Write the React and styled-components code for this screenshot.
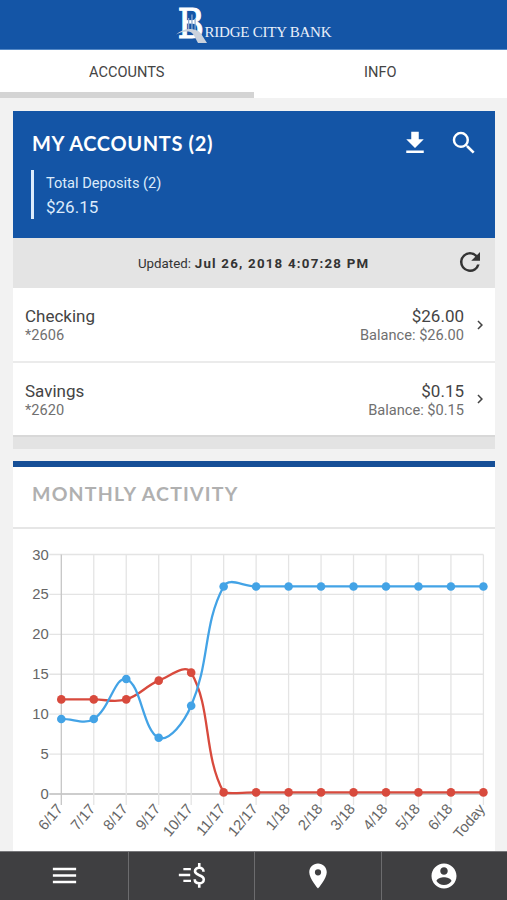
import React from 'react';
import styled, { createGlobalStyle } from 'styled-components';

const accounts = [
    { name: 'Checking', number: '*2606', available: '$26.00', balance: '$26.00' },
    { name: 'Savings', number: '*2620', available: '$0.15', balance: '$0.15' },
];

const months = ['6/17', '7/17', '8/17', '9/17', '10/17', '11/17', '12/17', '1/18', '2/18', '3/18', '4/18', '5/18', '6/18', 'Today'];
const deposits = [9.4, 9.4, 14.4, 7.05, 11.05, 26, 26, 26, 26, 26, 26, 26, 26, 26];
const withdrawals = [11.85, 11.85, 11.85, 14.2, 15.2, 0.2, 0.2, 0.2, 0.2, 0.2, 0.2, 0.2, 0.2, 0.2];

const area = { left: 48.3, right: 470.4, top: 25.5, bottom: 265 };

const getX = (i) => area.left + (i * (area.right - area.left)) / (months.length - 1);
const getY = (value) => area.bottom - (value * (area.bottom - area.top)) / 30;
const clampY = (y) => Math.min(area.bottom, Math.max(area.top, y));

// smooth line with control points kept inside of the chart area
const getPath = (values) => {
    const points = values.map((value, i) => ({ x: getX(i), y: getY(value) }));
    const controls = points.map((point, i) => {
        const prev = points[i - 1] || point;
        const next = points[i + 1] || point;
        const d1 = Math.hypot(point.x - prev.x, point.y - prev.y);
        const d2 = Math.hypot(next.x - point.x, next.y - point.y);
        const a = (0.4 * d1) / (d1 + d2);
        const b = (0.4 * d2) / (d1 + d2);
        return {
            inX: point.x - a * (next.x - prev.x),
            inY: clampY(point.y - a * (next.y - prev.y)),
            outX: point.x + b * (next.x - prev.x),
            outY: clampY(point.y + b * (next.y - prev.y)),
        };
    });

    return points.reduce((path, point, i) => {
        if (i === 0) return `M${point.x} ${point.y}`;
        const from = controls[i - 1];
        const to = controls[i];
        return `${path} C${from.outX} ${from.outY} ${to.inX} ${to.inY} ${point.x} ${point.y}`;
    }, '');
}

const Icon = ({ size, children }) => (
    <IconSvg viewBox="0 0 24 24" $size={size}>{children}</IconSvg>
)

const Line = ({ values, color }) => (
    <g>
        <path d={getPath(values)} fill="none" stroke={color} strokeWidth="2.3" />
        {values.map((value, i) => (
            <circle key={i} cx={getX(i)} cy={getY(value)} r="4.3" fill={color} />
        ))}
    </g>
)

const ActivityChart = () => (
    <Chart viewBox="0 0 482 322">
        {[0, 5, 10, 15, 20, 25, 30].map((value) => (
            <g key={value}>
                <line
                    x1={area.left - 12}
                    x2={area.right}
                    y1={getY(value)}
                    y2={getY(value)}
                    stroke={value === 0 ? '#bdbdbd' : '#e4e4e4'}
                    strokeWidth="1.3"
                />
                <AxisLabel x={area.left - 12.5} y={getY(value) + 5}>{value}</AxisLabel>
            </g>
        ))}
        {months.map((month, i) => (
            <g key={month}>
                <line
                    x1={getX(i)}
                    x2={getX(i)}
                    y1={area.top}
                    y2={area.bottom + 11}
                    stroke={i === 0 ? '#c6c6c6' : '#e4e4e4'}
                    strokeWidth="1.3"
                />
                <AxisLabel transform={`translate(${getX(i) - 1.5} ${area.bottom + 12}) rotate(-50)`} y="5">{month}</AxisLabel>
            </g>
        ))}
        <Line values={withdrawals} color="#d84a3d" />
        <Line values={deposits} color="#43a3e6" />
    </Chart>
)

const Logo = () => (
    <LogoSvg viewBox="0 0 160 44">
        <BigLetter transform="translate(1.5 38) scale(.88 1)">B</BigLetter>
        <path d="M12 30V18h1.300v12zM15.300 31V14.500h1.300V31zM18.500 32V19h1.200v13z" fill="#8fabd0" />
        <path d="M0 34.500C6 28.500 17 27 23 31.500C26 34 28 39 31 43H22C20 40 19 36 16 33C12 30.500 6 31.500 0 34.500z" fill="#c9d1dc" />
        <text x="28.500" y="36.500" fontSize="15" textLength="127" fill="#e9f0fa">RIDGE CITY BANK</text>
    </LogoSvg>
)

const App = () => {

    return(
        <Screen>
            <GlobalStyle />
            <Header><Logo /></Header>
            <Tabs>
                <Tab $active>ACCOUNTS</Tab>
                <Tab>INFO</Tab>
            </Tabs>
            <Content>
                <section>
                    <AccountsHeader>
                        <TitleRow>
                            <AccountsTitle>MY ACCOUNTS (2)</AccountsTitle>
                            <Actions>
                                <Icon size={30}><path d="M19 9h-4V3H9v6H5l7 7 7-7zM5 18v2h14v-2H5z" /></Icon>
                                <Icon size={30}><path d="M15.500 14h-.79l-.28-.27A6.471 6.471 0 0 0 16 9.500 6.500 6.500 0 1 0 9.500 16c1.610 0 3.090-.59 4.230-1.570l.27.28v.79l5 4.990L20.490 19l-4.990-5zm-6 0C7.010 14 5 11.990 5 9.500S7.010 5 9.500 5 14 7.010 14 9.500 11.990 14 9.500 14z" /></Icon>
                            </Actions>
                        </TitleRow>
                        <Total>
                            <TotalLabel>Total Deposits (2)</TotalLabel>
                            <TotalValue>$26.15</TotalValue>
                        </Total>
                    </AccountsHeader>
                    <Updated>
                        <UpdatedText>Updated: <UpdatedDate>Jul 26, 2018 4:07:28 PM</UpdatedDate></UpdatedText>
                        <Icon size={30}><path d="M17.650 6.350A7.958 7.958 0 0 0 12 4a8 8 0 1 0 7.730 10h-2.080A5.990 5.990 0 0 1 12 18c-3.310 0-6-2.690-6-6s2.690-6 6-6c1.660 0 3.140.69 4.220 1.780L13 11h7V4l-2.350 2.350z" /></Icon>
                    </Updated>
                    {accounts.map((account) => (
                        <Account key={account.number}>
                            <AccountInfo>
                                <Main>{account.name}</Main>
                                <Detail>{account.number}</Detail>
                            </AccountInfo>
                            <Amounts>
                                <Main>{account.available}</Main>
                                <Detail>Balance: {account.balance}</Detail>
                            </Amounts>
                            <Icon size={18}><path d="M10 6L8.590 7.410 13.170 12l-4.580 4.590L10 18l6-6z" /></Icon>
                        </Account>
                    ))}
                    <AccountsFooter />
                </section>
                <Activity>
                    <ActivityTitle>MONTHLY ACTIVITY</ActivityTitle>
                    <ActivityChart />
                </Activity>
            </Content>
            <Nav>
                <NavItem>
                    <Icon size={31}><path d="M3 18h18v-2H3v2zm0-5h18v-2H3v2zm0-7v2h18V6H3z" /></Icon>
                </NavItem>
                <NavItem>
                    <Icon size={31}>
                        <path d="M5.700 6.100h5.800v1.900H5.700zM2.200 10.600H11v1.900H2.200zM5.700 15.200h5.900v1.900H5.700z" />
                        <path d="M21.300 9C21.300 7.200 19.900 6 18 6C16 6 14.700 7.200 14.700 8.800C14.700 12.400 21.500 11.200 21.500 15C21.500 16.800 20 18 18 18C15.900 18 14.500 16.800 14.500 14.900M18 2.400V5.500M18 18.500V21.500" fill="none" stroke="currentColor" strokeWidth="2" />
                    </Icon>
                </NavItem>
                <NavItem>
                    <Icon size={30}><path d="M12 2C8.130 2 5 5.130 5 9c0 5.250 7 13 7 13s7-7.750 7-13c0-3.870-3.130-7-7-7zm0 9.500a2.500 2.500 0 0 1 0-5 2.500 2.500 0 0 1 0 5z" /></Icon>
                </NavItem>
                <NavItem>
                    <Icon size={30}><path d="M12 2C6.480 2 2 6.480 2 12s4.480 10 10 10 10-4.480 10-10S17.520 2 12 2zm0 3c1.660 0 3 1.340 3 3s-1.340 3-3 3-3-1.340-3-3 1.340-3 3-3zm0 14.200a7.200 7.200 0 0 1-6-3.220c.03-1.990 4-3.080 6-3.080 1.990 0 5.970 1.090 6 3.080a7.200 7.200 0 0 1-6 3.220z" /></Icon>
                </NavItem>
            </Nav>
        </Screen>
    )
}

export default App;

const GlobalStyle = createGlobalStyle`
    body {
        margin: 0;
        background: #f2f2f2;
        font-family: Roboto, sans-serif;
        color: #444;
    }

    * {
        box-sizing: border-box;
    }
`;

const Screen = styled.div`
    display: flex;
    flex-direction: column;
    height: 900px;
    overflow: hidden;
`;

const IconSvg = styled.svg`
    display: block;
    flex: none;
    width: ${(props) => props.$size}px;
    height: ${(props) => props.$size}px;
    fill: currentColor;
`;

const Header = styled.header`
    flex: none;
    height: 50px;
    padding-left: 176px;
    background: #1455a6;
    border-bottom: 1px solid #5488c6;
`;

const LogoSvg = styled.svg`
    display: block;
    width: 160px;
    height: 44px;
    overflow: visible;
    font-family: 'Liberation Serif', serif;
`;

const BigLetter = styled.text`
    font-family: 'DejaVu Serif', serif;
    font-size: 41px;
    fill: #fff;
    stroke: #fff;
    stroke-width: 1px;
`;

const Tabs = styled.nav`
    flex: none;
    display: flex;
    height: 48px;
    background: #fff;
`;

const Tab = styled.div`
    flex: 1;
    height: 48px;
    font-size: 14.6px;
    line-height: 44px;
    text-align: center;
    border-bottom: 6px solid ${(props) => props.$active ? '#d4d4d4' : '#fff'};
`;

const Content = styled.main`
    flex: 1;
    min-height: 0;
    display: flex;
    flex-direction: column;
    gap: 12px;
    padding: 13px 12px 0 13px;
    overflow: hidden;
`;

const AccountsHeader = styled.div`
    height: 127px;
    padding: 17px 16px 0 18px;
    background: #1455a6;
    color: #fff;
`;

const TitleRow = styled.div`
    display: flex;
    justify-content: space-between;
    height: 30px;
`;

const AccountsTitle = styled.h1`
    margin: 0 0 0 1px;
    font-family: Lato, sans-serif;
    font-size: 20px;
    font-weight: 700;
    line-height: 30px;
    letter-spacing: 0.65px;
`;

const Actions = styled.div`
    display: flex;
    gap: 19px;
`;

const Total = styled.div`
    height: 49px;
    margin-top: 12px;
    padding-left: 12px;
    border-left: 3px solid #dcebfb;
    color: #dcebfb;
`;

const TotalLabel = styled.div`
    font-size: 14.6px;
    line-height: 27px;
`;

const TotalValue = styled.div`
    font-size: 17px;
    line-height: 21px;
`;

const Updated = styled.div`
    display: flex;
    align-items: center;
    justify-content: space-between;
    height: 50px;
    padding: 0 10px 2px 125px;
    background: #e4e4e4;
    color: #333;
`;

const UpdatedText = styled.div`
    padding-top: 2px;
    font-size: 13.3px;
    white-space: nowrap;
`;

const UpdatedDate = styled.b`
    margin-left: 0.5px;
    letter-spacing: 1.22px;
`;

const Account = styled.div`
    display: flex;
    align-items: center;
    height: 75px;
    padding: 0 6px 0 12px;
    background: #fff;
    border-bottom: 2px solid #ebebeb;

    & + & {
        height: 72px;
        border-bottom: 0;
    }
`;

const AccountInfo = styled.div`
    flex: 1;
    padding-top: 2px;
`;

const Amounts = styled.div`
    margin-right: 7px;
    padding-top: 2px;
    text-align: right;
`;

const Main = styled.div`
    font-size: 17px;
    line-height: 20px;
    color: #444;
`;

const Detail = styled.div`
    font-size: 14.6px;
    line-height: 19px;
    color: #707070;
`;

const AccountsFooter = styled.div`
    height: 14px;
    background: #e3e3e3;
    border-top: 2px solid #d8d8d8;
`;

const Activity = styled.section`
    flex: none;
    height: 400px;
    background: #fff;
    border-top: 6px solid #164f97;
`;

const ActivityTitle = styled.h2`
    height: 62px;
    margin: 0;
    padding-left: 19px;
    border-bottom: 2px solid #e6e6e6;
    font-family: Lato, sans-serif;
    font-size: 19.5px;
    font-weight: 700;
    line-height: 53px;
    letter-spacing: 1.2px;
    color: #b0b0b0;
`;

const Chart = styled.svg`
    display: block;
    width: 482px;
    height: 322px;
`;

const AxisLabel = styled.text`
    font-family: 'Liberation Sans', sans-serif;
    font-size: 14.8px;
    text-anchor: end;
    fill: #666;
`;

const Nav = styled.nav`
    flex: none;
    display: flex;
    height: 49px;
    background: #3f3f41;
    border-top: 1px solid #77777a;
    color: #fff;
`;

const NavItem = styled.div`
    flex: 1;
    display: flex;
    align-items: center;
    justify-content: center;
    padding-bottom: 1px;

    &:first-child {
        flex: 0 0 128px;
    }

    & + & {
        border-left: 1px solid #6c6c6e;
    }
`;
